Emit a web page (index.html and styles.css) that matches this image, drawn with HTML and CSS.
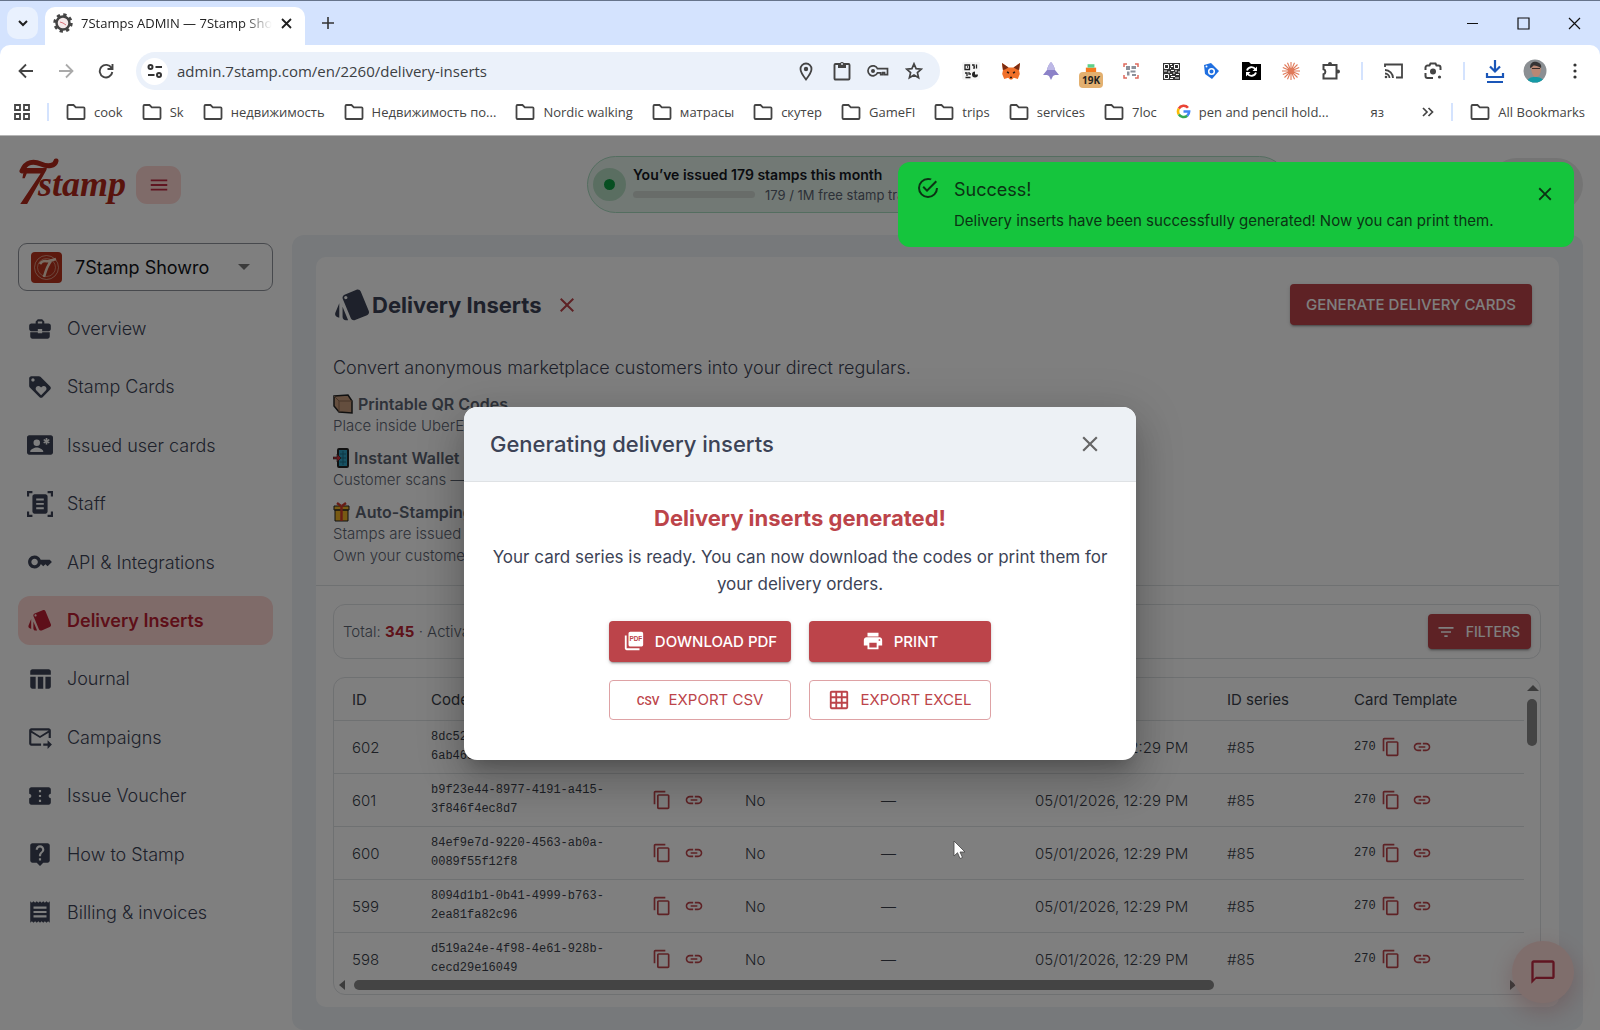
FILE: index.html
```html
<!DOCTYPE html>
<html lang="en">
<head>
<meta charset="utf-8">
<title>7Stamps ADMIN — 7Stamp Showroom</title>
<link rel="stylesheet" href="styles.css">
</head>
<body>

<!-- icon sprite -->
<svg class="sprite" aria-hidden="true">
	<symbol id="i-close" viewBox="0 0 24 24"><path d="M19 6.41L17.59 5 12 10.59 6.41 5 5 6.41 10.59 12 5 17.59 6.41 19 12 13.41 17.59 19 19 17.59 13.41 12z"/></symbol>
	<symbol id="i-menu" viewBox="0 0 24 24"><path d="M3 18h18v-2H3v2zm0-5h18v-2H3v2zm0-7v2h18V6H3z"/></symbol>
	<symbol id="i-business" viewBox="0 0 24 24"><path d="M10 16v-1H3.01L3 19c0 1.11.89 2 2 2h14c1.11 0 2-.89 2-2v-4h-7v1h-4zm10-9h-4.01V5l-2-2h-4l-2 2v2H4c-1.1 0-2 .9-2 2v3c0 1.11.89 2 2 2h6v-2h4v2h6c1.1 0 2-.9 2-2V9c0-1.1-.9-2-2-2zm-6 0h-4V5h4v2z"/></symbol>
	<symbol id="i-loyalty" viewBox="0 0 24 24"><path d="M21.41 11.58l-9-9C12.05 2.22 11.55 2 11 2H4c-1.1 0-2 .9-2 2v7c0 .55.22 1.05.59 1.42l9 9c.36.36.86.58 1.41.58.55 0 1.05-.22 1.41-.59l7-7c.37-.36.59-.86.59-1.41 0-.55-.23-1.06-.59-1.42zM5.5 7C4.67 7 4 6.33 4 5.5S4.67 4 5.5 4 7 4.67 7 5.5 6.33 7 5.5 7zm11.77 8.27L13 19.54l-4.27-4.27C8.28 14.81 8 14.19 8 13.5c0-1.38 1.12-2.5 2.5-2.5.69 0 1.32.28 1.77.74l.73.72.73-.73c.45-.45 1.08-.73 1.77-.73 1.38 0 2.5 1.12 2.5 2.5 0 .69-.28 1.32-.73 1.77z"/></symbol>
	<symbol id="i-usercard" viewBox="0 0 24 24"><path fill-rule="evenodd" d="M2 3h20c1.1 0 2 .9 2 2v14c0 1.1-.9 2-2 2H2c-1.1 0-2-.9-2-2V5c0-1.100.9-2 2-2zM9 7a3 3 0 1 0 0 6 3 3 0 0 0 0-6zM3 18v.5h12V18c0-2-4-3.600-6-3.600S3 16 3 18z"/><path d="M18 5.500v6M15.400 7l5.200 3M20.600 7l-5.200 3" stroke="#fff" stroke-width="1.500"/></symbol>
	<symbol id="i-scanner" viewBox="0 0 24 24"><path fill-rule="evenodd" d="M7 3h10c1.100 0 2 .9 2 2v14c0 1.100-.9 2-2 2H7c-1.100 0-2-.9-2-2V5c0-1.100.9-2 2-2zm1.500 4v1.800h7V7zm0 4v1.800h7V11zm0 4v1.800h7V15z"/><path d="M1 5V1h4M19 1h4v4M1 19v4h4M19 23h4v-4" fill="none" stroke="currentColor" stroke-width="2"/></symbol>
	<symbol id="i-key" viewBox="0 0 24 24"><path d="M21 10h-8.350C11.830 7.670 9.610 6 7 6c-3.310 0-6 2.690-6 6s2.690 6 6 6c2.610 0 4.830-1.670 5.650-4H13l2 2 2-2 2 2 4-4.040L21 10zM7 15c-1.650 0-3-1.350-3-3s1.350-3 3-3 3 1.350 3 3-1.350 3-3 3z"/></symbol>
	<symbol id="i-style" viewBox="0 0 24 24"><path d="M2.53 19.65l1.34.56v-9.03l-2.43 5.86c-.41 1.02.08 2.19 1.09 2.61zm19.5-3.700L17.07 3.980c-.31-.75-1.040-1.210-1.810-1.230-.26 0-.53.040-.79.15L7.100 5.950c-.75.31-1.210 1.030-1.230 1.800-.010.27.040.54.15.8l4.960 11.970c.31.76 1.050 1.220 1.830 1.230.26 0 .52-.050.77-.15l7.360-3.050c1.020-.42 1.510-1.590 1.090-2.600zM7.880 8.750c-.55 0-1-.45-1-1s.45-1 1-1 1 .45 1 1-.45 1-1 1zm-2 11c0 1.100.9 2 2 2h1.450l-3.450-8.340v6.340z"/></symbol>
	<symbol id="i-table" viewBox="0 0 24 24"><path d="M10 10.020h5V21h-5zM17 21h3c1.100 0 2-.9 2-2v-9h-5v11zm3-18H5c-1.100 0-2 .9-2 2v3h19V5c0-1.100-.9-2-2-2zM3 19c0 1.100.9 2 2 2h3V10H3v9z"/></symbol>
	<symbol id="i-inbox" viewBox="0 0 24 24"><path d="M20 4H4c-1.100 0-1.990.9-1.990 2L2 18c0 1.100.9 2 2 2h9v-2H4V8l8 5 8-5v5h2V6c0-1.100-.9-2-2-2zm-8 7L4 6h16l-8 5zm7 4 4 4-4 4v-3h-4v-2h4v-3z"/></symbol>
	<symbol id="i-ticket" viewBox="0 0 24 24"><path d="M22 10V6c0-1.110-.9-2-2-2H4c-1.100 0-1.990.89-1.990 2v4c1.100 0 1.990.9 1.990 2s-.89 2-2 2v4c0 1.100.9 2 2 2h16c1.100 0 2-.9 2-2v-4c-1.100 0-2-.9-2-2s.9-2 2-2zm-9 7.500h-2v-2h2v2zm0-4.500h-2v-2h2v2zm0-4.500h-2v-2h2v2z"/></symbol>
	<symbol id="i-help" viewBox="0 0 24 24"><path d="M19 2H5c-1.110 0-2 .9-2 2v14c0 1.100.89 2 2 2h4l3 3 3-3h4c1.100 0 2-.9 2-2V4c0-1.100-.9-2-2-2zm-6 16h-2v-2h2v2zm2.070-7.750l-.9.920C13.450 11.900 13 12.500 13 14h-2v-.5c0-1.100.45-2.100 1.170-2.830l1.240-1.260c.37-.36.59-.86.59-1.410 0-1.100-.9-2-2-2s-2 .9-2 2H8c0-2.210 1.790-4 4-4s4 1.790 4 4c0 .88-.36 1.680-.93 2.250z"/></symbol>
	<symbol id="i-receipt" viewBox="0 0 24 24"><path d="M18 17H6v-2h12v2zm0-4H6v-2h12v2zm0-4H6V7h12v2zM3 22l1.500-1.500L6 22l1.500-1.500L9 22l1.500-1.500L12 22l1.500-1.500L15 22l1.500-1.500L18 22l1.500-1.500L21 22V2l-1.500 1.500L18 2l-1.500 1.500L15 2l-1.500 1.500L12 2l-1.500 1.500L9 2 7.500 3.500 6 2 4.500 3.500 3 2v20z"/></symbol>
	<symbol id="i-copy" viewBox="0 0 24 24"><path d="M16 1H4c-1.100 0-2 .9-2 2v14h2V3h12V1zm3 4H8c-1.100 0-2 .9-2 2v14c0 1.100.9 2 2 2h11c1.100 0 2-.9 2-2V7c0-1.100-.9-2-2-2zm0 16H8V7h11v14z"/></symbol>
	<symbol id="i-link" viewBox="0 0 24 24"><path d="M3.900 12c0-1.710 1.390-3.100 3.100-3.100h4V7H7c-2.760 0-5 2.240-5 5s2.240 5 5 5h4v-1.900H7c-1.710 0-3.100-1.390-3.100-3.100zM8 13h8v-2H8v2zm9-6h-4v1.900h4c1.710 0 3.100 1.390 3.100 3.100s-1.390 3.100-3.100 3.100h-4V17h4c2.760 0 5-2.240 5-5s-2.240-5-5-5z"/></symbol>
	<symbol id="i-print" viewBox="0 0 24 24"><path d="M19 8H5c-1.660 0-3 1.340-3 3v6h4v4h12v-4h4v-6c0-1.660-1.340-3-3-3zm-3 11H8v-5h8v5zm3-7c-.55 0-1-.45-1-1s.45-1 1-1 1 .45 1 1-.45 1-1 1zm-1-9H6v4h12V3z"/></symbol>
	<symbol id="i-grid" viewBox="0 0 24 24"><path d="M20 2H4c-1.100 0-2 .9-2 2v16c0 1.100.9 2 2 2h16c1.100 0 2-.9 2-2V4c0-1.100-.9-2-2-2zM8 20H4v-4h4v4zm0-6H4v-4h4v4zm0-6H4V4h4v4zm6 12h-4v-4h4v4zm0-6h-4v-4h4v4zm0-6h-4V4h4v4zm6 12h-4v-4h4v4zm0-6h-4v-4h4v4zm0-6h-4V4h4v4z"/></symbol>
	<symbol id="i-filter" viewBox="0 0 24 24"><path d="M10 18h4v-2h-4v2zM3 6v2h18V6H3zm3 7h12v-2H6v2z"/></symbol>
	<symbol id="i-chat" viewBox="0 0 24 24"><path d="M20 2H4c-1.100 0-2 .9-2 2v18l4-4h14c1.100 0 2-.9 2-2V4c0-1.100-.9-2-2-2zm0 14H6l-2 2V4h16v12z"/></symbol>
	<symbol id="i-success" viewBox="0 0 24 24"><path d="M20,12A8,8 0 0,1 12,20A8,8 0 0,1 4,12A8,8 0 0,1 12,4C12.76,4 13.5,4.11 14.2,4.31L15.77,2.74C14.61,2.26 13.34,2 12,2A10,10 0 0,0 2,12A10,10 0 0,0 12,22A10,10 0 0,0 22,12M7.91,10.08L6.5,11.5L11,16L21,6L19.59,4.58L11,13.17L7.91,10.08Z"/></symbol>
	<symbol id="i-folder" viewBox="0 0 20 18"><path d="M2.500 2h5l2.300 2.300h7.700c.6 0 1 .4 1 1V15c0 .6-.4 1-1 1h-15c-.6 0-1-.4-1-1V3c0-.6.4-1 1-1z" fill="none" stroke="currentColor" stroke-width="1.800"/></symbol>
</svg>

<header class="browser">
	<div class="tabstrip">
		<button class="tab-search" aria-label="Search tabs"><svg width="12" height="12" viewBox="0 0 12 12"><path d="M2 4l4 4 4-4" fill="none" stroke="#1f1f1f" stroke-width="2"/></svg></button>
		<div class="tab">
			<svg width="20" height="20" viewBox="0 0 20 20"><circle cx="10" cy="10" r="6.500" fill="#f4e9ea" stroke="#444" stroke-width="2.500"/><circle cx="10" cy="10" r="8.200" fill="none" stroke="#444" stroke-width="3" stroke-dasharray="3.220 3.220"/><path d="M7 9l3 1 3 2" stroke="#d9727a" fill="none"/></svg>
			<span class="tab__title">7Stamps ADMIN — 7Stamp Sho</span>
			<button class="tab__close" aria-label="Close tab"><svg width="11" height="11" viewBox="0 0 11 11"><path d="M1 1l9 9M10 1l-9 9" stroke="#1f1f1f" stroke-width="1.800"/></svg></button>
		</div>
		<button class="tab-new" aria-label="New tab"><svg width="14" height="14" viewBox="0 0 14 14"><path d="M7 1v12M1 7h12" stroke="#333" stroke-width="1.600"/></svg></button>
		<div class="window-buttons">
			<button aria-label="Minimize"><svg width="13" height="13" viewBox="0 0 13 13"><path d="M1 6.500h11" stroke="#111"/></svg></button>
			<button aria-label="Maximize"><svg width="13" height="13" viewBox="0 0 13 13"><path d="M1 1h11v11H1z" fill="none" stroke="#111" stroke-width="1.200"/></svg></button>
			<button aria-label="Close"><svg width="13" height="13" viewBox="0 0 13 13"><path d="M1 1l11 11M12 1L1 12" stroke="#111" stroke-width="1.200"/></svg></button>
		</div>
	</div>

	<div class="toolbar">
		<button class="tool" aria-label="Back"><svg width="16" height="16" viewBox="0 0 16 16"><path d="M15 8H2M8 1.500L1.500 8 8 14.500" fill="none" stroke="#444" stroke-width="1.800"/></svg></button>
		<button class="tool" aria-label="Forward"><svg width="16" height="16" viewBox="0 0 16 16"><path d="M1 8h13M8 1.500L14.500 8 8 14.500" fill="none" stroke="#aaa" stroke-width="1.800"/></svg></button>
		<button class="tool" aria-label="Reload"><svg width="16" height="16" viewBox="0 0 16 16"><path d="M13.500 5A6.300 6.300 0 1 0 14.300 9M14.500 1v5h-5" fill="none" stroke="#444" stroke-width="1.900"/></svg></button>
		<div class="omnibox">
			<span class="omnibox__site"><svg width="16" height="16" viewBox="0 0 16 16"><g fill="none" stroke="#333" stroke-width="2"><circle cx="3.500" cy="4" r="2"/><path d="M8.500 4H15M1 12h6.500"/><circle cx="12" cy="12" r="2"/></g></svg></span>
			<input class="omnibox__url" type="text" aria-label="Address" value="admin.7stamp.com/en/2260/delivery-inserts">
			<button aria-label="Location"><svg width="18" height="20" viewBox="0 0 18 20"><path d="M9 18.500C5.500 14 3.500 11.500 3.500 8a5.500 5.500 0 0 1 11 0c0 3.500-2 6-5.500 10.500z" fill="none" stroke="#444" stroke-width="1.800"/><circle cx="9" cy="8" r="2.200" fill="#444"/></svg></button>
			<button aria-label="Clipboard"><svg width="18" height="20" viewBox="0 0 18 20"><rect x="1.500" y="3" width="15" height="15.500" rx="1" fill="none" stroke="#444" stroke-width="1.900"/><path d="M5 2.500h2a2.100 2.100 0 0 1 4 0h2V7H5z" fill="#444"/><circle cx="9" cy="3" r=".9" fill="#ebf1fa"/></svg></button>
			<button aria-label="Passwords"><svg width="22" height="14" viewBox="0 0 22 14"><path d="M10.500 4.700H20.500v6h-3V8.600h-1.800v2.100h-2V8.900h-3.200A5 5 0 1 1 10.500 4.700z" fill="none" stroke="#444" stroke-width="1.700"/><circle cx="6" cy="7" r="2" fill="#444"/></svg></button>
			<button aria-label="Bookmark this tab"><svg width="18" height="18" viewBox="0 0 18 18"><path d="M9 1.800l2.100 4.800 5.300.5-4 3.500 1.200 5.100L9 13l-4.600 2.700 1.200-5.100-4-3.500 5.300-.5z" fill="none" stroke="#444" stroke-width="1.700"/></svg></button>
		</div>
		<div class="extensions">
			<button class="tool" aria-label="QR generator"><svg width="18" height="18" viewBox="0 0 18 18"><rect width="18" height="18" rx="2" fill="#f5f5f5"/><g fill="none" stroke="#222" stroke-width="1.300"><path d="M3 3h4.500v4.500H3zM5 5h1M10 3h2v4M14.500 2.500v4M3 11h2v3M7 10v2h2M3.500 15.500h5M12 5h1"/></g><path d="M13 9.500v3h3a3 3 0 1 1-3-3z" fill="#222"/></svg></button>
			<button class="tool" aria-label="Wallet"><svg width="18" height="17" viewBox="0 0 18 17"><path d="M0 0l6.500 4.500h5L18 0l-1 7 .8 4-2 5-4-1.200L10 16.500H8L6.200 14.800 2.200 16l-2-5L1 7z" fill="#f0702a"/><path d="M0 0l6.500 4.500L3 6.500.9 7zM18 0l-6.500 4.500L15 6.500l2.100.5z" fill="#7a2c12"/><path d="M5 9l2 1M13 9l-2 1M8 14.500h2" stroke="#2d1b12" stroke-width="1.400"/></svg></button>
			<button class="tool" aria-label="Rocket"><svg width="16" height="18" viewBox="0 0 16 18"><path d="M8 0c3 3 3.500 6 4 8l4 5h-4l-2 1-2 4-2-4-2-1H0l4-5c.5-2 1-5 4-8z" fill="#8c82c8"/><path d="M8 0c3 3 3.500 6 4 8H4c.5-2 1-5 4-8z" fill="#bdb8e6"/></svg></button>
			<button class="tool tool--badge" aria-label="Mail counter"><svg width="12" height="9" viewBox="0 0 14 10"><path d="M1 4h12v6H1z" fill="#f47a20"/><path d="M3 0h8v4H3z" fill="#5fd08a"/></svg><span class="badge">19K</span></button>
			<button class="tool" aria-label="QR scanner"><svg width="16" height="16" viewBox="0 0 16 16"><g fill="none" stroke="#e0695c" stroke-width="1.500"><path d="M1 4V1h3M12 1h3v3M1 12v3h3M12 15h3v-3"/></g><path d="M3 3h4v4H3zM8.500 3H13v3H8.500zM4 8.500h2.500v4H4zM7.500 7.500h5v2h-5zM9 11h4v2H9z" fill="#8b909a"/></svg></button>
			<button class="tool" aria-label="QR code"><svg width="17" height="17" viewBox="0 0 17 17"><path fill="#333" d="M0 0h17v17H0z"/><g fill="none" stroke="#fff"><path d="M1.500 1.500h4v4h-4zM11.500 1.500h4v4h-4zM1.500 11.500h4v4h-4z"/><path d="M7 1.500h2M8 3.500h2M7 5.500h1M1 8h3M5 9h2M8 7.500h3M12 8h2M15 9h2M7 11.500h2M10 10h2M13 11.500h3M8 13.500h4M7 15.500h3M12 15h4"/></g></svg></button>
			<button class="tool" aria-label="Price tag"><svg width="16" height="16" viewBox="0 0 16 16"><path d="M1 2l7-2 8 8-7 8-7-5z" fill="#1f6fe0"/><circle cx="8.500" cy="8.500" r="2.800" fill="none" stroke="#fff" stroke-width="1.500"/><circle cx="3.500" cy="3.500" r="1" fill="#fff"/></svg></button>
			<button class="tool" aria-label="Sync"><svg width="19" height="18" viewBox="0 0 19 18"><path d="M0 0h7l2 2h10v16H0z" fill="#000"/><path d="M5 8.500a4.700 4.700 0 0 1 8.500-1M14 10.500a4.700 4.700 0 0 1-8.500 1" fill="none" stroke="#fff" stroke-width="1.800"/><path d="M15 4.500V9h-4.500zM4 14.500V10h4.500z" fill="#fff"/></svg></button>
			<button class="tool" aria-label="Assistant"><svg width="18" height="18" viewBox="0 0 18 18"><path d="M9 0v18M0 9h18M2.500 2.500l13 13M15.500 2.500l-13 13M5.500.8l7 16.400M12.500.8l-7 16.400M.8 5.500l16.400 7M17.200 5.500L.8 12.500" stroke="#e07a5a" stroke-width="1.100"/></svg></button>
			<button class="tool" aria-label="Extensions"><svg width="20" height="20" viewBox="0 0 20 20"><path d="M2.500 4h13v13.500h-13v-4.200a2.600 2.600 0 0 0 0-5z" fill="none" stroke="#444" stroke-width="2"/><circle cx="9" cy="3" r="2" fill="#444"/><circle cx="17" cy="10.500" r="2" fill="#444"/></svg></button>
			<span class="tool-sep"></span>
			<button class="tool" aria-label="Cast"><svg width="19" height="16" viewBox="0 0 19 16"><path d="M1 4V1.500h17v13h-6M1 7a8 8 0 0 1 8 8M1 10.500A4.500 4.500 0 0 1 5.500 15" fill="none" stroke="#444" stroke-width="1.800"/><circle cx="2" cy="14" r="1.300" fill="#444"/></svg></button>
			<button class="tool" aria-label="Lens"><svg width="18" height="18" viewBox="0 0 18 18"><path d="M1.500 8V5.500a2 2 0 0 1 2-2h2l1-2h5l1 2h2a2 2 0 0 1 2 2V8M1.500 11v3a2 2 0 0 0 2 2H9" fill="none" stroke="#444" stroke-width="2"/><circle cx="9" cy="9.500" r="3" fill="#444"/><circle cx="15.500" cy="15" r="1.600" fill="#444"/></svg></button>
			<span class="tool-sep"></span>
			<button class="tool" aria-label="Downloads"><svg width="20" height="26" viewBox="0 0 20 26"><path d="M10 2v11M5 8.500l5 5 5-5M2 15v4h16v-4M2 24h16" fill="none" stroke="#1a56b8" stroke-width="2.200"/></svg></button>
			<button class="tool" aria-label="Profile"><svg width="24" height="24" viewBox="0 0 24 24"><clipPath id="face"><circle cx="12" cy="12" r="11.500"/></clipPath><g clip-path="url(#face)"><path fill="#8b8f93" d="M0 0h24v24H0z"/><path d="M4 24c0-5 4-6 8-6s9 1 9 6z" fill="#159aa6"/><path d="M8 8c0-3 10-3 10 1 0 5-2 9-5 9s-5-5-5-10z" fill="#b98774"/><path d="M7 9c0-6 4-7 7-6s5 3 4 6c-3-2-7-3-8-2s-2 2-3 2z" fill="#353334"/><path d="M9 9.500h8" stroke="#3a2c28" stroke-width="1.200"/></g></svg></button>
			<button class="tool" aria-label="Menu"><svg width="4" height="16" viewBox="0 0 4 16"><g fill="#333"><circle cx="2" cy="2" r="1.600"/><circle cx="2" cy="8" r="1.600"/><circle cx="2" cy="14" r="1.600"/></g></svg></button>
		</div>
	</div>

	<nav class="bookmarks" aria-label="Bookmarks">
		<button class="bookmarks__apps" aria-label="Apps"><svg width="16" height="16" viewBox="0 0 16 16"><path d="M1 1h5v5H1zM10 1h5v5h-5zM1 10h5v5H1zM10 10h5v5h-5z" fill="none" stroke="#444" stroke-width="1.800"/></svg></button>
		<span class="bookmarks__sep"></span>
		<a href="#"><svg><use href="#i-folder"/></svg>cook</a>
		<a href="#"><svg><use href="#i-folder"/></svg>Sk</a>
		<a href="#"><svg><use href="#i-folder"/></svg>недвижимость</a>
		<a href="#"><svg><use href="#i-folder"/></svg>Недвижимость по...</a>
		<a href="#"><svg><use href="#i-folder"/></svg>Nordic walking</a>
		<a href="#"><svg><use href="#i-folder"/></svg>матрасы</a>
		<a href="#"><svg><use href="#i-folder"/></svg>скутер</a>
		<a href="#"><svg><use href="#i-folder"/></svg>GameFI</a>
		<a href="#"><svg><use href="#i-folder"/></svg>trips</a>
		<a href="#"><svg><use href="#i-folder"/></svg>services</a>
		<a href="#"><svg><use href="#i-folder"/></svg>7loc</a>
		<a class="bookmark--google" href="#"><svg viewBox="0 0 16 16"><g fill="none" stroke-width="2.800"><path d="M12.800 4A6 6 0 0 0 3 5" stroke="#ea4335"/><path d="M3 5a6 6 0 0 0 0 6" stroke="#fbbc05"/><path d="M3 11a6 6 0 0 0 9 1.500" stroke="#34a853"/><path d="M8 8h6a6 6 0 0 1-2 4.500" stroke="#4285f4"/></g></svg>pen and pencil hold...</a>
		<a class="bookmark--plain" href="#">яз</a>
		<button class="bookmarks__more" aria-label="More bookmarks"><svg width="12" height="10" viewBox="0 0 12 10"><path d="M1 1l4 4-4 4M6.500 1l4 4-4 4" fill="none" stroke="#444" stroke-width="1.700"/></svg></button>
		<span class="bookmarks__sep"></span>
		<a href="#"><svg><use href="#i-folder"/></svg>All Bookmarks</a>
	</nav>
</header>

<div class="app">
	<header class="app-header">
		<a class="logo" href="#" aria-label="7stamp">
			<svg width="114" height="56" viewBox="0 0 114 56">
				<g fill="#b3281a">
					<text class="logo__seven" x="2" y="47">7</text>
					<text class="logo__word" x="22" y="39">stamp</text>
				</g>
				<path d="M6 14C10 4 18 4 25 7s14 2 15-3" fill="none" stroke="#b3281a" stroke-width="5" stroke-linecap="round"/>
			</svg>
		</a>
		<button class="menu-button" aria-label="Toggle menu"><svg class="icon"><use href="#i-menu"/></svg></button>
		<div class="usage">
			<span class="usage__dot"></span>
			<div class="usage__info">
				<div class="usage__title">You’ve issued 179 stamps this month</div>
				<div class="usage__row">
					<div class="usage__bar"></div>
					<span>179 / 1M free stamp transactions</span>
				</div>
			</div>
		</div>
		<div class="account"></div>
	</header>

	<div class="app-body">
		<aside class="sidebar">
			<label class="tenant">
				<svg width="31" height="31" viewBox="0 0 31 31"><rect width="31" height="31" rx="4" fill="#b8321c"/><g fill="none" stroke="#f3d9c4"><circle cx="15.500" cy="15.500" r="12" stroke-opacity=".6"/><circle cx="15.500" cy="15.500" r="9" stroke-opacity=".5"/><path d="M9 12c3-5 6-2 9-3s4-1 7-2M20 9c-4 5-5 9-7 16" stroke-width="2.600"/></g></svg>
				<select class="tenant__select" aria-label="Company"><option>7Stamp Showro</option></select>
				<svg class="tenant__arrow" width="12" height="6" viewBox="0 0 12 6"><path d="M0 0h12L6 6z"/></svg>
			</label>
			<nav class="nav">
				<a class="nav__item" href="#"><svg class="icon"><use href="#i-business"/></svg>Overview</a>
				<a class="nav__item" href="#"><svg class="icon"><use href="#i-loyalty"/></svg>Stamp Cards</a>
				<a class="nav__item" href="#"><svg class="icon"><use href="#i-usercard"/></svg>Issued user cards</a>
				<a class="nav__item" href="#"><svg class="icon"><use href="#i-scanner"/></svg>Staff</a>
				<a class="nav__item" href="#"><svg class="icon"><use href="#i-key"/></svg>API &amp; Integrations</a>
				<a class="nav__item nav__item--active" href="#"><svg class="icon"><use href="#i-style"/></svg>Delivery Inserts</a>
				<a class="nav__item" href="#"><svg class="icon"><use href="#i-table"/></svg>Journal</a>
				<a class="nav__item" href="#"><svg class="icon"><use href="#i-inbox"/></svg>Campaigns</a>
				<a class="nav__item" href="#"><svg class="icon"><use href="#i-ticket"/></svg>Issue Voucher</a>
				<a class="nav__item" href="#"><svg class="icon"><use href="#i-help"/></svg>How to Stamp</a>
				<a class="nav__item" href="#"><svg class="icon"><use href="#i-receipt"/></svg>Billing &amp; invoices</a>
			</nav>
		</aside>

		<main class="panel">
			<section class="card">
				<div class="card__intro">
					<div class="card__head">
						<svg class="icon icon--title"><use href="#i-style"/></svg>
						<h1>Delivery Inserts</h1>
						<button class="card__close" aria-label="Hide description"><svg class="icon"><use href="#i-close"/></svg></button>
						<button class="btn btn--filled">GENERATE DELIVERY CARDS</button>
					</div>
					<p class="lead">Convert anonymous marketplace customers into your direct regulars.</p>
					<div class="feature">
						<h2><svg width="20" height="20" viewBox="0 0 20 20"><path d="M1 2l14-1 4 6v12l-13-1-5-6z" fill="#c99c7c" stroke="#222" stroke-width="1.500"/><path d="M1 2l5 5 13 0M6 7v11" stroke="#8d6a52" fill="none"/></svg>Printable QR Codes</h2>
						<p>Place inside UberEats orders.</p>
					</div>
					<div class="feature">
						<h2><svg width="16" height="20" viewBox="0 0 16 20"><rect x="5" y="1" width="10" height="18" rx="1" fill="#2fa3c4" stroke="#222" stroke-width="2"/><path d="M7 6h6M7 10h6M7 14h6M10 3v14" stroke="#1a6e88"/><path d="M0 9h4V6l4 4-4 4v-3H0z" fill="#c8323c" stroke="#222" stroke-width=".6"/></svg>Instant Wallet Cards</h2>
						<p>Customer scans — card is added.</p>
					</div>
					<div class="feature">
						<h2><svg width="17" height="20" viewBox="0 0 17 20"><path d="M2 8h13v11H2zM1 4h15v4H1z" fill="#f0b429" stroke="#222"/><path d="M8.500 4v15M8 4L4 1M9 4l4-3" stroke="#d0382c" stroke-width="2.400"/></svg>Auto-Stamping</h2>
						<p>Stamps are issued instantly.<br>Own your customers.</p>
					</div>
				</div>

				<div class="card__data">
					<div class="summary">
						<span>Total: <b>345</b> · Activated: <b>0</b></span>
						<button class="btn btn--filled btn--small"><svg class="icon"><use href="#i-filter"/></svg>FILTERS</button>
					</div>

					<div class="grid">
						<div class="grid__view">
							<table>
								<colgroup><col class="c-id"><col class="c-code"><col class="c-active"><col class="c-when"><col class="c-created"><col class="c-series"><col></colgroup>
								<thead>
									<tr><th>ID</th><th>Code</th><th>Activated</th><th>Activated at</th><th>Created</th><th>ID series</th><th>Card Template</th></tr>
								</thead>
								<tbody>
									<tr>
										<td>602</td>
										<td><div class="code"><code>8dc52f10-7c3e-4b1d-9a52-6ab463c98074</code><svg><use href="#i-copy"/></svg><svg><use href="#i-link"/></svg></div></td>
										<td>No</td><td>—</td><td>05/01/2026, 12:29 PM</td><td>#85</td>
										<td><div class="tpl"><code>270</code><svg><use href="#i-copy"/></svg><svg><use href="#i-link"/></svg></div></td>
									</tr>
									<tr>
										<td>601</td>
										<td><div class="code"><code>b9f23e44-8977-4191-a415-3f846f4ec8d7</code><svg><use href="#i-copy"/></svg><svg><use href="#i-link"/></svg></div></td>
										<td>No</td><td>—</td><td>05/01/2026, 12:29 PM</td><td>#85</td>
										<td><div class="tpl"><code>270</code><svg><use href="#i-copy"/></svg><svg><use href="#i-link"/></svg></div></td>
									</tr>
									<tr>
										<td>600</td>
										<td><div class="code"><code>84ef9e7d-9220-4563-ab0a-0089f55f12f8</code><svg><use href="#i-copy"/></svg><svg><use href="#i-link"/></svg></div></td>
										<td>No</td><td>—</td><td>05/01/2026, 12:29 PM</td><td>#85</td>
										<td><div class="tpl"><code>270</code><svg><use href="#i-copy"/></svg><svg><use href="#i-link"/></svg></div></td>
									</tr>
									<tr>
										<td>599</td>
										<td><div class="code"><code>8094d1b1-0b41-4999-b763-2ea81fa82c96</code><svg><use href="#i-copy"/></svg><svg><use href="#i-link"/></svg></div></td>
										<td>No</td><td>—</td><td>05/01/2026, 12:29 PM</td><td>#85</td>
										<td><div class="tpl"><code>270</code><svg><use href="#i-copy"/></svg><svg><use href="#i-link"/></svg></div></td>
									</tr>
									<tr>
										<td>598</td>
										<td><div class="code"><code>d519a24e-4f98-4e61-928b-cecd29e16049</code><svg><use href="#i-copy"/></svg><svg><use href="#i-link"/></svg></div></td>
										<td>No</td><td>—</td><td>05/01/2026, 12:29 PM</td><td>#85</td>
										<td><div class="tpl"><code>270</code><svg><use href="#i-copy"/></svg><svg><use href="#i-link"/></svg></div></td>
									</tr>
								</tbody>
							</table>
						</div>
						<div class="vscroll">
							<svg width="12" height="6" viewBox="0 0 12 6"><path d="M0 6h12L6 0z"/></svg>
							<span class="vscroll__thumb"></span>
						</div>
						<div class="hscroll">
							<svg width="6" height="10" viewBox="0 0 6 10"><path d="M6 0v10L0 5z"/></svg>
							<span class="hscroll__track"><span class="hscroll__thumb"></span></span>
							<svg width="6" height="10" viewBox="0 0 6 10"><path d="M0 0v10l6-5z"/></svg>
						</div>
					</div>
				</div>
			</section>
		</main>
	</div>

	<button class="fab" aria-label="Chat"><svg class="icon"><use href="#i-chat"/></svg></button>

	<div class="backdrop">
		<div class="modal" role="dialog" aria-labelledby="modal-title">
			<div class="modal__head">
				<h2 id="modal-title">Generating delivery inserts</h2>
				<button aria-label="Close"><svg class="icon"><use href="#i-close"/></svg></button>
			</div>
			<div class="modal__body">
				<h3>Delivery inserts generated!</h3>
				<p>Your card series is ready. You can now download the codes or print them for your delivery orders.</p>
				<div class="modal__actions">
					<button class="btn btn--filled"><svg class="icon" viewBox="0 0 24 24"><path d="M20 2H8c-1.100 0-2 .9-2 2v12c0 1.100.9 2 2 2h12c1.100 0 2-.9 2-2V4c0-1.100-.9-2-2-2zM4 6H2v14c0 1.100.9 2 2 2h14v-2H4V6z"/><text class="icon__pdf" x="14" y="12" text-anchor="middle">PDF</text></svg>DOWNLOAD PDF</button>
					<button class="btn btn--filled"><svg class="icon"><use href="#i-print"/></svg>PRINT</button>
					<button class="btn btn--outlined"><svg class="icon" viewBox="0 0 24 24"><text class="icon__csv" x="12" y="17" text-anchor="middle">CSV</text></svg>EXPORT CSV</button>
					<button class="btn btn--outlined"><svg class="icon"><use href="#i-grid"/></svg>EXPORT EXCEL</button>
				</div>
			</div>
		</div>
	</div>

	<div class="toast" role="alert">
		<svg class="icon"><use href="#i-success"/></svg>
		<div class="toast__text">
			<strong>Success!</strong>
			<p>Delivery inserts have been successfully generated! Now you can print them.</p>
		</div>
		<button aria-label="Dismiss"><svg class="icon"><use href="#i-close"/></svg></button>
	</div>

	<svg class="pointer" width="14" height="20" viewBox="0 0 14 20"><path d="M1 1v15l3.500-3.300L7 18.500l2.500-1L7 12h5z" fill="#fff" stroke="#444" stroke-width=".8"/></svg>
</div>

</body>
</html>
```
FILE: styles.css
```css
* {
	box-sizing: border-box;
}

html, body {
	height: 100%;
}

body {
	margin: 0;
	display: flex;
	flex-direction: column;
	overflow: hidden;
	font-family: Inter, "Noto Sans", sans-serif;
	color: #3c4356;
}

h1, h2, h3, p {
	margin: 0;
}

a {
	color: inherit;
	text-decoration: none;
}

button {
	display: flex;
	align-items: center;
	justify-content: center;
	padding: 0;
	border: none;
	background: none;
	color: inherit;
	font-family: inherit;
}

svg {
	flex: none;
}

.sprite {
	position: absolute;
	width: 0;
	height: 0;
}

.icon {
	width: 24px;
	height: 24px;
	fill: currentColor;
}

/* browser */

.browser {
	flex: none;
	border-top: 1px solid #66748b;
	border-bottom: 1px solid #b5b5b5;
	background: #d4e3fe;
	font-family: "Open Sans", "Noto Sans", sans-serif;
	color: #444;
}

.tabstrip {
	display: flex;
	align-items: flex-start;
	height: 44px;
	padding: 6px 0 0 7px;
}

.tab-search {
	width: 31px;
	height: 32px;
	border-radius: 10px;
	background: #e9f1fe;
}

.tab {
	display: flex;
	align-items: center;
	width: 260px;
	height: 38px;
	margin-left: 7px;
	padding: 0 12px 6px 8px;
	border-radius: 10px 10px 0 0;
	background: #fff;
}

.tab__title {
	flex: 1;
	margin: 0 8px;
	overflow: hidden;
	white-space: nowrap;
	font-size: 13px;
	color: #222;
	-webkit-mask-image: linear-gradient(to right, #000 85%, transparent);
	mask-image: linear-gradient(to right, #000 85%, transparent);
}

.tab__close {
	width: 13px;
	height: 13px;
}

.tab-new {
	width: 32px;
	height: 32px;
	margin-left: 7px;
}

.window-buttons {
	display: flex;
	margin-left: auto;
}

.window-buttons button {
	width: 51px;
	height: 32px;
}

.toolbar {
	display: flex;
	align-items: center;
	height: 52px;
	padding: 0 5px 0 6px;
	border-radius: 10px 10px 0 0;
	background: #fff;
}

.tool {
	position: relative;
	width: 40px;
	height: 38px;
}

.tool--badge {
	align-items: flex-start;
	padding-top: 12px;
}

.badge {
	position: absolute;
	left: 8px;
	top: 20px;
	width: 24px;
	border-radius: 4px;
	background: #e3b070;
	color: #222;
	font-size: 10px;
	font-weight: 700;
	line-height: 16px;
	text-align: center;
}

.omnibox {
	display: flex;
	flex: 1;
	align-items: center;
	height: 38px;
	margin: 0 11px 0 10px;
	padding: 0 8px 0 5px;
	border-radius: 19px;
	background: #ebf1fa;
}

.omnibox button {
	width: 36px;
	height: 36px;
}

.omnibox__site {
	display: flex;
	align-items: center;
	justify-content: center;
	width: 27px;
	height: 27px;
	border-radius: 50%;
	background: #fff;
}

.omnibox__url {
	flex: 1;
	min-width: 0;
	margin: 0 0 0 9px;
	padding: 0;
	border: none;
	background: none;
	color: #3c4043;
	font-family: inherit;
	font-size: 15px;
}

.extensions {
	display: flex;
}

.tool-sep {
	width: 2px;
	height: 18px;
	margin: 10px;
	background: #d4e3fe;
}

.bookmarks {
	display: flex;
	align-items: center;
	height: 38px;
	padding: 0 15px 9px 14px;
	background: #fff;
	font-size: 13px;
	white-space: nowrap;
}

.bookmarks a {
	display: flex;
	align-items: center;
	gap: 8px;
	margin-left: 19px;
}

.bookmarks .bookmarks__sep + a {
	margin-left: 17px;
}

.bookmarks a svg {
	width: 20px;
	height: 18px;
}

.bookmarks a.bookmark--google svg {
	width: 15px;
	height: 15px;
}

.bookmarks a.bookmark--plain {
	margin-left: 42px;
}

.bookmarks__sep {
	width: 2px;
	height: 18px;
	margin-left: 17px;
	background: #d4e3fe;
}

.bookmarks__more {
	margin-left: auto;
}

/* app */

.app {
	position: relative;
	display: flex;
	flex: 1;
	flex-direction: column;
	min-height: 0;
	background: #fff;
}

.app-header {
	display: flex;
	flex: none;
	align-items: center;
	height: 99px;
	padding: 0 17px 2px 16px;
}

.logo {
	margin-right: 6px;
}

.logo svg {
	display: block;
}

.logo__seven {
	font: italic 700 54px "Liberation Serif", serif;
}

.logo__word {
	font: italic 700 36px "Liberation Serif", serif;
}

.menu-button {
	width: 45px;
	height: 38px;
	border-radius: 11px;
	background: #ffd6d3;
	color: #c02a42;
}

.menu-button .icon {
	width: 22px;
	height: 22px;
}

.usage {
	display: flex;
	align-items: center;
	gap: 7px;
	width: 701px;
	height: 57px;
	margin-left: auto;
	padding-left: 5px;
	border: 1px solid #a9dcc1;
	border-radius: 29px;
	background: #e4f3ea;
}

.usage__dot {
	width: 33px;
	height: 33px;
	border: 11px solid #b5dcc3;
	border-radius: 50%;
	background: #0e9f43;
}

.usage__title {
	color: #14171f;
	font-size: 14px;
	font-weight: 600;
	line-height: 20px;
}

.usage__row {
	display: flex;
	align-items: center;
	gap: 10px;
	color: #5a6270;
	font-size: 13px;
	line-height: 20px;
}

.usage__bar {
	width: 122px;
	height: 7px;
	border-radius: 4px;
	background: #d0d8d3;
}

.account {
	width: 93px;
	height: 53px;
	margin-left: 202px;
	border-radius: 27px;
	background: #e9e9e9;
}

.app-body {
	display: flex;
	flex: 1;
	gap: 19px;
	min-height: 0;
	padding: 0 17px 0 18px;
}

.sidebar {
	display: flex;
	flex: none;
	flex-direction: column;
	width: 255px;
	padding: 8px 0 93px;
}

.tenant {
	display: flex;
	align-items: center;
	height: 48px;
	padding: 0 22px 0 12px;
	border: 1px solid #8f939b;
	border-radius: 9px;
}

.tenant__select {
	flex: 1;
	min-width: 0;
	margin-left: 13px;
	padding: 0;
	border: none;
	background: none;
	appearance: none;
	color: #111319;
	font-family: inherit;
	font-size: 18px;
	opacity: 1;
}

.tenant__arrow {
	fill: #777;
}

.nav {
	display: flex;
	flex: 1;
	flex-direction: column;
	justify-content: space-between;
	margin-top: 13px;
}

.nav__item {
	display: flex;
	align-items: center;
	gap: 14px;
	height: 49px;
	padding-left: 9px;
	border-radius: 12px;
	font-size: 18px;
	font-weight: 300;
}

.nav__item .icon {
	width: 26px;
	height: 26px;
}

.nav__item--active {
	background: #ffd6d3;
	color: #bd1e32;
	font-weight: 600;
}

.panel {
	flex: 1;
	min-width: 0;
	padding: 22px 24px 23px;
	border-radius: 12px;
	background: #eff3f7;
}

.card {
	display: flex;
	flex-direction: column;
	height: 100%;
	border-radius: 10px;
	background: #fff;
}

.card__intro {
	padding: 27px 27px 8px 17px;
	border-bottom: 1px solid #dfe2e5;
}

.card__head {
	display: flex;
	align-items: center;
	margin-bottom: 29px;
}

.card__head h1 {
	font-size: 22px;
	font-weight: 700;
}

.icon--title {
	width: 39px;
	height: 39px;
}

.card__close {
	margin-left: 14px;
	color: #bc444a;
}

.card__close .icon {
	width: 24px;
	height: 24px;
}

.card__head .btn {
	margin-left: auto;
	padding: 0 16px;
}

.lead {
	margin-bottom: 12px;
	font-size: 18px;
	font-weight: 300;
	line-height: 27px;
}

.feature {
	margin-bottom: 10px;
	color: #5d6573;
	font-size: 15px;
	font-weight: 300;
	line-height: 22px;
}

.feature h2 {
	display: flex;
	align-items: center;
	gap: 5px;
	font-size: 16px;
	font-weight: 600;
	line-height: 22px;
}

.btn {
	gap: 10px;
	height: 41px;
	border-radius: 4px;
	font-size: 15px;
	font-weight: 500;
}

.btn--filled {
	background: #bc444a;
	color: #fff;
	box-shadow: 0 3px 1px -2px rgba(0, 0, 0, .2), 0 2px 2px rgba(0, 0, 0, .14), 0 1px 5px rgba(0, 0, 0, .12);
}

.btn--outlined {
	height: 40px;
	border: 1px solid #dea2a5;
	color: #bc444a;
	font-weight: 400;
}

.btn--small {
	height: 35px;
	padding: 0 11px 0 8px;
	font-size: 14px;
}

.btn--small .icon {
	width: 20px;
	height: 20px;
}

.card__data {
	display: flex;
	flex: 1;
	flex-direction: column;
	gap: 18px;
	min-height: 0;
	padding: 18px 18px 12px 17px;
}

.summary {
	display: flex;
	flex: none;
	align-items: center;
	justify-content: space-between;
	height: 55px;
	padding: 0 9px;
	border: 1px solid #dfe2e5;
	border-radius: 12px;
	color: #5d6573;
	font-size: 15px;
	font-weight: 300;
}

.summary b {
	color: #bc2434;
	font-weight: 700;
}

.grid {
	display: grid;
	flex: 1;
	grid-template-columns: 1fr 16px;
	grid-template-rows: 1fr 14px;
	min-height: 0;
	border: 1px solid #dfe2e5;
	border-radius: 12px;
}

.grid__view {
	min-height: 0;
	overflow: hidden;
}

table {
	width: 100%;
	border-collapse: separate;
	border-spacing: 0;
	table-layout: fixed;
	color: #3a3f4a;
	font-size: 15px;
}

th, td {
	height: 53px;
	padding: 0 0 0 18px;
	border-bottom: 1px solid #dfe2e5;
	font-weight: 300;
	text-align: left;
	white-space: nowrap;
}

th {
	height: 43px;
	font-weight: 400;
}

.c-id { width: 79px; }
.c-code { width: 314px; }
.c-active { width: 136px; }
.c-when { width: 154px; }
.c-created { width: 192px; }
.c-series { width: 127px; }

code {
	font-family: "Liberation Mono", monospace;
	font-size: 12px;
	font-weight: 400;
	line-height: 19px;
}

.code, .tpl {
	display: flex;
	align-items: center;
	gap: 12px;
}

.code code {
	width: 209px;
	padding-right: 24px;
	white-space: normal;
}

.tpl {
	gap: 11px;
}

.tpl code {
	margin-right: -6px;
}

td svg {
	width: 20px;
	height: 20px;
	fill: #bc444a;
}

.vscroll {
	padding: 7px 0 0 3px;
	fill: #777;
}

.vscroll svg {
	display: block;
}

.vscroll__thumb {
	display: block;
	width: 10px;
	height: 47px;
	margin-top: 8px;
	border-radius: 5px;
	background: #888;
}

.hscroll {
	display: flex;
	padding: 0 8px 0 5px;
	fill: #777;
}

.hscroll__track {
	flex: 1;
	margin: 0 9px;
}

.hscroll__thumb {
	display: block;
	width: 75%;
	height: 10px;
	border-radius: 5px;
	background: #888;
}

.fab {
	position: absolute;
	right: 26px;
	bottom: 27px;
	width: 62px;
	height: 62px;
	border-radius: 50%;
	background: #ffdcd9;
	color: #c02a42;
	box-shadow: 0 8px 24px rgba(188, 68, 74, .3);
}

.fab .icon {
	width: 28px;
	height: 28px;
}

/* modal */

.backdrop {
	position: absolute;
	inset: 0;
	display: flex;
	align-items: center;
	justify-content: center;
	background: rgba(0, 0, 0, .5);
}

.modal {
	width: 672px;
	border-radius: 13px;
	overflow: hidden;
	background: #fff;
	box-shadow: 0 11px 15px -7px rgba(0, 0, 0, .2), 0 24px 38px 3px rgba(0, 0, 0, .14), 0 9px 46px 8px rgba(0, 0, 0, .12);
}

.modal__head {
	display: flex;
	align-items: center;
	justify-content: space-between;
	height: 75px;
	padding: 0 33px 0 26px;
	border-bottom: 1px solid #dfe2e5;
	background: #edf1f5;
}

.modal__head h2 {
	font-size: 22px;
	font-weight: 500;
}

.modal__head button {
	color: #666;
}

.modal__head .icon {
	width: 26px;
	height: 26px;
}

.modal__body {
	padding: 20px 26px 40px;
	text-align: center;
}

.modal__body h3 {
	margin-bottom: 10px;
	color: #bc444a;
	font-size: 22px;
	font-weight: 700;
	line-height: 32px;
}

.modal__body p {
	font-size: 17px;
	line-height: 27px;
}

.modal__actions {
	display: grid;
	grid-template-columns: 182px 182px;
	gap: 18px;
	justify-content: center;
	margin-top: 23px;
}

.modal__actions .icon {
	width: 22px;
	height: 22px;
	overflow: visible;
}

.icon__pdf {
	fill: #bc444a;
	font: 700 7px "Liberation Sans", sans-serif;
}

.icon__csv {
	font: 500 13px "Roboto", sans-serif;
}

/* toast */

.toast {
	position: absolute;
	top: 26px;
	right: 26px;
	display: flex;
	width: 676px;
	padding: 14px 18px 13px;
	border-radius: 12px;
	background: #15c53d;
	color: #0b3314;
}

.toast__text {
	flex: 1;
	margin-left: 14px;
}

.toast strong {
	display: block;
	font-size: 18px;
	font-weight: 400;
	line-height: 27px;
}

.toast p {
	margin-top: 5px;
	font-size: 15px;
	line-height: 26px;
}

.toast button {
	width: 22px;
	height: 36px;
}

.toast button .icon {
	width: 22px;
	height: 22px;
}

.pointer {
	position: absolute;
	left: 953px;
	top: 704px;
}
```
